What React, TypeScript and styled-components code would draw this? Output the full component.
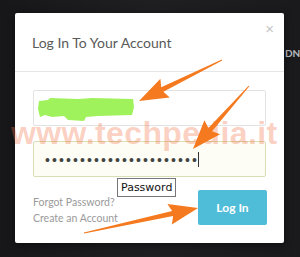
import React from "react";
import styled, { createGlobalStyle } from "styled-components";

const Global = createGlobalStyle`
  html, body { margin: 0; padding: 0; }
  body {
    width: 300px;
    height: 257px;
    overflow: hidden;
    background: #1c1c1f;
    font-family: Lato, "Liberation Sans", sans-serif;
  }
`;

const Stage = styled.div`
  position: relative;
  width: 300px;
  height: 257px;
  padding: 13px 0 0 15px;
  box-sizing: border-box;
  background: linear-gradient(90deg, #17171a 0%, #1f1f22 50%, #1a1a1d 100%);
`;

const BackText = styled.div`
  position: absolute;
  left: 285px;
  top: 47px;
  font-family: Lato, sans-serif;
  font-weight: 700;
  font-size: 10px;
  line-height: 12px;
  color: #b9bcc2;
`;

const Modal = styled.div`
  position: relative;
  width: 269px;
  height: 230px;
  background: #fff;
  border-radius: 2px;
  box-shadow: 0 2px 8px rgba(0, 0, 0, 0.5);
  display: flex;
  flex-direction: column;
`;

const Header = styled.div`
  height: 59px;
  padding: 0 10px 0 17px;
  display: flex;
  align-items: center;
  justify-content: space-between;
  border-bottom: 1px solid #e6e6e6;
  box-sizing: border-box;
`;

const Title = styled.div`
  font-family: Lato, sans-serif;
  font-size: 14px;
  color: #5a5a5a;
`;

const Close = styled.div`
  font-family: "Liberation Sans", sans-serif;
  font-size: 15px;
  color: #c4c4c4;
  align-self: flex-start;
  margin-top: 7px;
`;

const Body = styled.div`
  padding: 18px 17px 0 18px;
  display: flex;
  flex-direction: column;
`;

const Field = styled.div<{ $focused?: boolean }>`
  position: relative;
  height: 36px;
  width: 233px;
  box-sizing: border-box;
  border: 1px solid ${(p) => (p.$focused ? "#d9ddb6" : "#e2e2e2")};
  background: ${(p) => (p.$focused ? "#fdfdf6" : "#fff")};
  border-radius: 2px;
  display: flex;
  align-items: center;
  padding-left: 11px;
`;

const Dots = styled.span`
  font-family: "Liberation Sans", sans-serif;
  font-size: 14px;
  letter-spacing: 2.1px;
  color: #444;
  margin-top: 1px;
`;

const Caret = styled.span`
  display: inline-block;
  width: 1px;
  height: 15px;
  background: #333;
  margin-left: -1px;
`;

const Gap = styled.div<{ $h: number }>`
  height: ${(p) => p.$h}px;
`;

const Tooltip = styled.div`
  position: absolute;
  left: 83px;
  top: 36px;
  padding: 2px 3px 2px;
  border: 1px solid #767676;
  background: #fff;
  font-family: "DejaVu Sans", sans-serif;
  font-size: 11px;
  color: #111;
  z-index: 2;
`;

const Footer = styled.div`
  display: flex;
  justify-content: space-between;
  align-items: flex-end;
  margin-top: 13px;
`;

const Links = styled.div`
  display: flex;
  flex-direction: column;
  gap: 4px;
  padding-bottom: 1px;
`;

const LinkText = styled.a`
  font-family: Lato, sans-serif;
  font-size: 10.5px;
  color: #9a9a9a;
  text-decoration: none;
`;

const Button = styled.button`
  width: 69px;
  height: 35px;
  border: none;
  border-radius: 2px;
  background: #4fbcd8;
  color: #fff;
  font-family: Lato, sans-serif;
  font-weight: 700;
  font-size: 12px;
`;

const Watermark = styled.div`
  position: absolute;
  left: 11px;
  top: 115px;
  font-family: "Liberation Sans", sans-serif;
  font-weight: 700;
  font-size: 32px;
  letter-spacing: 0.4px;
  color: rgba(240, 110, 60, 0.33);
  pointer-events: none;
  z-index: 3;
`;

const Overlay = styled.svg`
  position: absolute;
  left: 0;
  top: 0;
  pointer-events: none;
  z-index: 4;
`;

type Pt = [number, number];

function arrowPoints(t: Pt, p: Pt, L = 26, W = 21, w0 = 1, w1 = 5): string {
  const dx = p[0] - t[0];
  const dy = p[1] - t[1];
  const len = Math.hypot(dx, dy);
  const ux = dx / len;
  const uy = dy / len;
  const nx = -uy;
  const ny = ux;
  const b: Pt = [p[0] - ux * L, p[1] - uy * L];
  const pts: Pt[] = [
    [t[0] + (nx * w0) / 2, t[1] + (ny * w0) / 2],
    [b[0] + (nx * w1) / 2, b[1] + (ny * w1) / 2],
    [b[0] + (nx * W) / 2 - ux * 3, b[1] + (ny * W) / 2 - uy * 3],
    p,
    [b[0] - (nx * W) / 2 - ux * 3, b[1] - (ny * W) / 2 - uy * 3],
    [b[0] - (nx * w1) / 2, b[1] - (ny * w1) / 2],
    [t[0] - (nx * w0) / 2, t[1] - (ny * w0) / 2],
  ];
  return pts.map((q) => `${q[0].toFixed(1)},${q[1].toFixed(1)}`).join(" ");
}

const Blob = () => (
  <svg width="96" height="24" viewBox="0 0 96 24" style={{ marginLeft: -7, marginTop: 3 }}>
    <path
      d="M1 3 L10 2 L12 0 L40 1 L54 0 L95 1 L96 9 L94 17 L60 18 L48 19 L46 23 L30 22 L26 18 L14 19 L7 17 L2 19 L0 11 Z"
      fill="#a0f25c"
    />
  </svg>
);

export default function App() {
  return (
    <>
      <Global />
      <Stage>
        <BackText>DN</BackText>
        <Modal>
          <Header>
            <Title>Log In To Your Account</Title>
            <Close>×</Close>
          </Header>
          <Body>
            <Field>
              <Blob />
            </Field>
            <Gap $h={15} />
            <Field $focused>
              <Dots>{"•".repeat(22)}</Dots>
              <Caret />
              <Tooltip>Password</Tooltip>
            </Field>
            <Footer>
              <Links>
                <LinkText>Forgot Password?</LinkText>
                <LinkText>Create an Account</LinkText>
              </Links>
              <Button>Log In</Button>
            </Footer>
          </Body>
        </Modal>
        <Watermark>www.techpedia.it</Watermark>
        <Overlay width="300" height="257" viewBox="0 0 300 257">
          <polygon points={arrowPoints([222, 60], [139, 101])} fill="#f57a1f" />
          <polygon points={arrowPoints([249, 86], [193, 149])} fill="#f57a1f" />
          <polygon points={arrowPoints([84, 233], [198, 208])} fill="#f57a1f" />
        </Overlay>
      </Stage>
    </>
  );
}
